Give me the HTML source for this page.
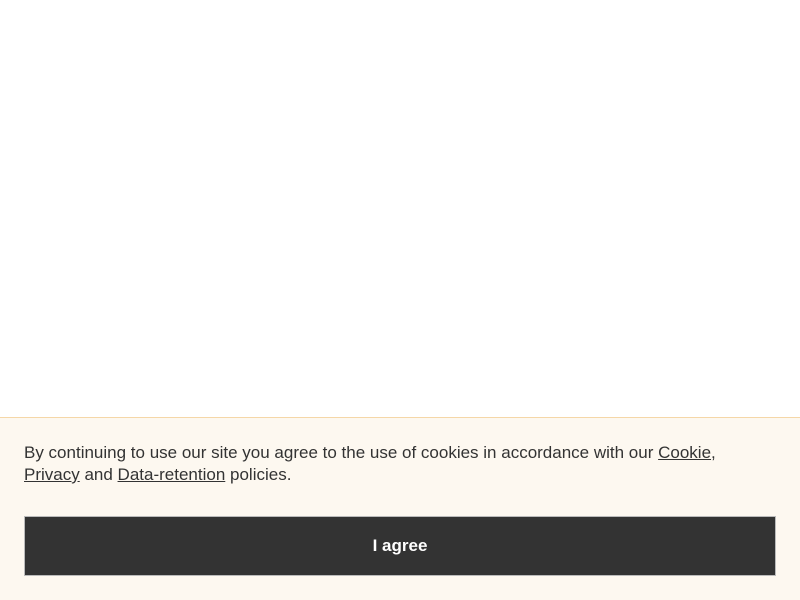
<!DOCTYPE html>
<html><head><meta charset="utf-8"><style>
html,body{margin:0;padding:0;width:800px;height:600px;background:#fff;overflow:hidden;font-family:"Liberation Sans",Arial,sans-serif}
.banner{position:absolute;left:0;top:417px;width:800px;height:183px;background:#fdf8f0;border-top:1px solid #f5d7a8;box-sizing:border-box}
.txt{position:absolute;left:24px;top:24px;width:760px;font-size:17px;line-height:22px;color:#333}
.txt a{color:#333;text-decoration:underline}
.btn{position:absolute;left:24px;top:98px;width:752px;height:60px;box-sizing:border-box;background:#333;border:1px solid #bbb;color:#fff;font-weight:bold;font-size:17px;display:flex;align-items:center;justify-content:center}
</style></head><body>
<div class="banner">
<div class="txt">By continuing to use our site you agree to the use of cookies in accordance with our <a>Cookie</a>,<br><a>Privacy</a> and <a>Data-retention</a> policies.</div>
<div class="btn">I agree</div>
</div>
</body></html>
